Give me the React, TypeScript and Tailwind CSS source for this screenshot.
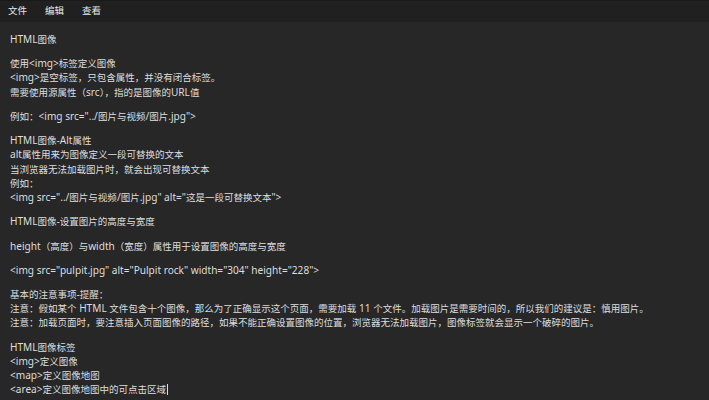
const lines: string[] = [
  'HTML图像',
  '',
  '使用<img>标签定义图像',
  '<img>是空标签，只包含属性，并没有闭合标签。',
  '需要使用源属性（src），指的是图像的URL值',
  '',
  '例如：<img src="../图片与视频/图片.jpg">',
  '',
  'HTML图像-Alt属性',
  'alt属性用来为图像定义一段可替换的文本',
  '当浏览器无法加载图片时，就会出现可替换文本',
  '例如：',
  '<img src="../图片与视频/图片.jpg" alt="这是一段可替换文本">',
  '',
  'HTML图像-设置图片的高度与宽度',
  '',
  'height（高度）与width（宽度）属性用于设置图像的高度与宽度',
  '',
  '<img src="pulpit.jpg" alt="Pulpit rock" width="304" height="228">',
  '',
  '基本的注意事项-提醒：',
  '注意：假如某个 HTML 文件包含十个图像，那么为了正确显示这个页面，需要加载 11 个文件。加载图片是需要时间的，所以我们的建议是：慎用图片。',
  '注意：加载页面时，要注意插入页面图像的路径，如果不能正确设置图像的位置，浏览器无法加载图片，图像标签就会显示一个破碎的图片。',
  '',
  'HTML图像标签',
  '<img>定义图像',
  '<map>定义图像地图',
  '<area>定义图像地图中的可点击区域',
];

const menu = ['文件', '编辑', '查看'];

// latin runs are set a bit larger than the CJK runs, like Segoe UI next to YaHei
function Line({ text }: { text: string }) {
  const parts = text.split(/([\x00-\x7F]+)/).filter((p) => p !== '');
  return (
    <>
      {parts.map((p, i) =>
        /^[\x00-\x7F]+$/.test(p) ? (
          <span key={i} className="font-['Noto_Sans',sans-serif] text-[10.1px]">
            {p}
          </span>
        ) : (
          <span key={i} className="font-['Noto_Sans_CJK_SC',sans-serif] text-[9.5px]">
            {p}
          </span>
        ),
      )}
    </>
  );
}

export default function App() {
  return (
    <div
      className="flex h-[400px] w-full flex-col overflow-hidden bg-[#272727] text-[#dedede]"
      style={{ fontFamily: '"Noto Sans", "Noto Sans CJK SC", sans-serif' }}
    >
      {/* menu bar */}
      <div className="flex h-[22px] shrink-0 items-center gap-[18px] border-t border-[#1a1a1a] bg-[#202020] pl-[8px] text-[9.5px] text-[#e8e8e8]">
        {menu.map((m) => (
          <span key={m}>{m}</span>
        ))}
      </div>

      {/* editor */}
      <div className="flex-1 px-[10px] pt-[8px]">
        {lines.map((l, i) =>
          l === '' ? (
            <div key={i} className="h-[10.1px]" />
          ) : (
            <div key={i} className="h-[14.2px] whitespace-pre leading-[14.2px]">
              <Line text={l} />
              {i === lines.length - 1 && (
                <span className="ml-[1px] inline-block h-[11px] w-px translate-y-[2px] bg-[#dedede]" />
              )}
            </div>
          ),
        )}
      </div>
    </div>
  );
}
